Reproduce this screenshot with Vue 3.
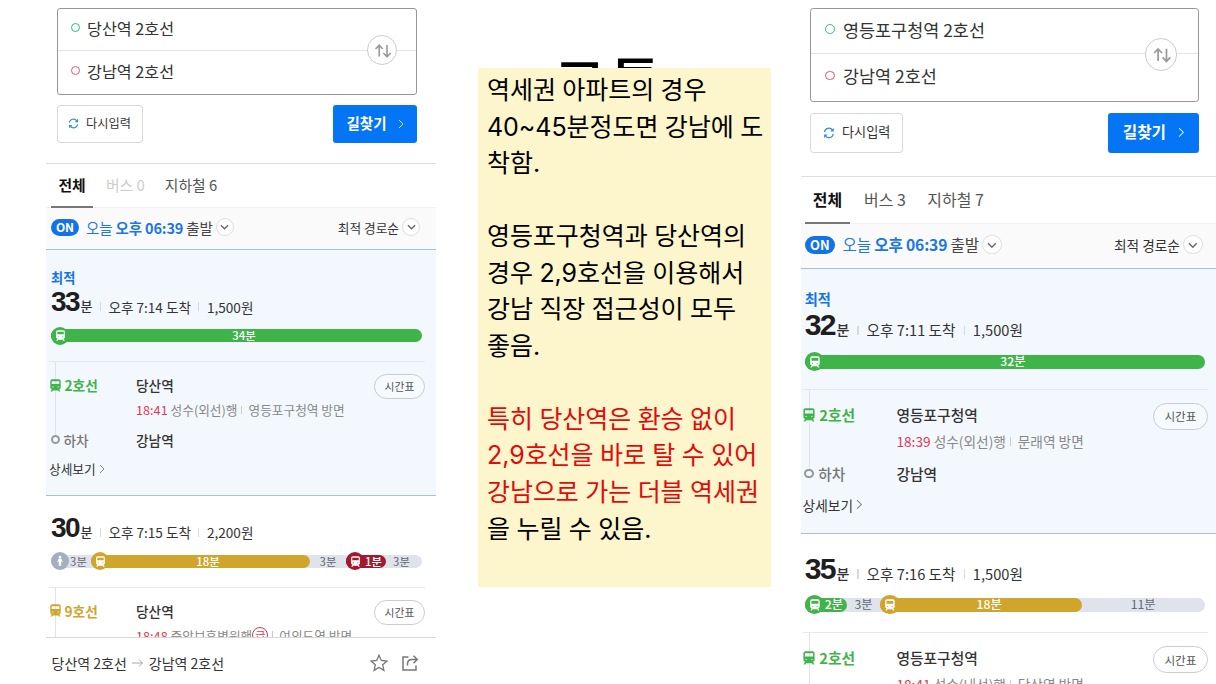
<template>
  <main class="slide">
    <div
      v-for="panel in panels"
      :key="panel.id"
      class="panel"
      :class="panel.id"
    >
      <div class="sheet">
        <section class="search">
          <div class="fields">
            <div class="field from"><i></i>{{ panel.from }}</div>
            <div class="field to"><i></i>{{ panel.to }}</div>
            <button class="swap">
              <svg viewBox="0 0 30 30" width="30" height="30">
                <path d="M11.2 20.500V9.500M7.600 13l3.600-3.800 3.600 3.800M19 9v11.500M15.400 17l3.600 3.800 3.600-3.800" />
              </svg>
            </button>
          </div>
          <div class="buttons">
            <button class="reset">
              <svg viewBox="0 0 12 12" width="11" height="11">
                <path d="M1.5 5.2A4.5 4.5 0 0 1 9.6 3.1M10.5 6.8a4.5 4.5 0 0 1-8.1 2.1" />
                <path class="tip" d="M10.9.9v3.6H7.3zM1.1 11.1V7.5h3.6z" />
              </svg>
              <span>다시입력</span>
            </button>
            <button class="find">
              <span>길찾기</span>
              <svg viewBox="0 0 6 10" width="6" height="10">
                <path d="M1 1l4 4-4 4" />
              </svg>
            </button>
          </div>
        </section>

        <nav class="tabs">
          <span class="active">전체</span>
          <span :class="{ empty: panel.bus == 0 }">버스 {{ panel.bus }}</span>
          <span>지하철 {{ panel.subway }}</span>
        </nav>

        <div class="filter">
          <b class="on">ON</b>
          <span class="when">오늘 <b>오후 06:39</b> <em>출발</em></span>
          <span class="chevron">
            <svg viewBox="0 0 10 6" width="9" height="6"><path d="M1 1l4 4 4-4" /></svg>
          </span>
          <span class="sort">최적 경로순</span>
          <span class="chevron">
            <svg viewBox="0 0 10 6" width="9" height="6"><path d="M1 1l4 4 4-4" /></svg>
          </span>
        </div>

        <section class="routes">
          <article
            v-for="route in panel.routes"
            :key="route.minutes"
            class="route"
            :class="{ best: route.best }"
          >
            <div v-if="route.best" class="badge">최적</div>
            <div class="summary">
              <strong>{{ route.minutes }}</strong><b>분</b>
              <span>오후 {{ route.arrival }} 도착</span>
              <span>{{ route.fare }}원</span>
            </div>
            <div class="track">
              <div
                v-for="(seg, i) in route.segments"
                :key="i"
                class="segment"
                :class="seg.kind"
                :style="{ width: seg.width + 'px' }"
              >
                <span v-if="seg.kind != 'gap'" class="dot">
                  <svg v-if="seg.kind == 'walk'" viewBox="0 0 12 12" width="12" height="12">
                    <circle cx="6" cy="2" r="1.3" />
                    <path d="M4.8 3.6h2.4L8.8 7l-.8.5-1-1.5.2 5H6.2L6 8l-.3 3h-1L5 6 4 7.5 3.3 7z" />
                  </svg>
                  <svg v-else viewBox="0 0 12 12" width="11" height="11">
                    <path :d="trainPath" fill-rule="evenodd" />
                  </svg>
                </span>
                {{ seg.label }}분
              </div>
            </div>
            <div class="steps">
              <div class="step">
                <span class="line" :class="route.line.kind">
                  <svg viewBox="0 0 12 12" width="13" height="13">
                    <path :d="trainPath" fill-rule="evenodd" />
                  </svg>
                  {{ route.line.name }}
                </span>
                <span class="station">{{ panel.station }}</span>
                <button class="timetable">시간표</button>
              </div>
              <div class="detail">
                <em>{{ route.line.time }}</em> {{ route.line.bound
                }}<i v-if="route.line.express">급</i>
                <span>{{ route.line.via }} 방면</span>
              </div>
              <template v-if="route.best">
                <div class="step off">
                  <span class="line"><i></i>하차</span>
                  <span class="station">강남역</span>
                </div>
                <div class="more">
                  상세보기
                  <svg viewBox="0 0 6 10" width="6" height="10"><path d="M1 1l4 4-4 4" /></svg>
                </div>
              </template>
            </div>
          </article>
        </section>

        <footer v-if="panel.footer" class="bottom">
          {{ panel.from }}
          <svg class="arrow" viewBox="0 0 12 10" width="12" height="10">
            <path d="M0 5h10.5M7 1.5L10.5 5 7 8.5" />
          </svg>
          {{ panel.to }}
          <svg class="star" viewBox="0 0 18 18" width="18" height="18">
            <path d="M9 1.2l2.3 5.2 5.6.6-4.2 3.8 1.2 5.6L9 13.5l-4.9 2.9 1.2-5.6L1.1 7l5.6-.6z" />
          </svg>
          <svg class="share" viewBox="0 0 18 18" width="18" height="18">
            <path d="M7.5 3H2v13h13v-4.5M6.5 11.5V10q0-4.5 4.5-4.5h4.5M12.500 1.800l3.700 3.700-3.700 3.700" />
          </svg>
        </footer>
      </div>
    </div>

    <section class="memo">
      <h1>교통</h1>
      <div class="note">
        <p v-for="(line, i) in note" :key="i" :class="{ red: line.red }">
          {{ line.text }}
        </p>
      </div>
    </section>
  </main>
</template>

<script setup>
const trainPath =
  "M3 .3h6Q10.800.3 10.800 2v5.800Q10.800 9.300 9.300 9.300H2.700Q1.200 9.300 1.200 7.800V2Q1.200.3 3 .3zM2.500 2v2.700h7v-2.700zM3 7v.8h1.200v-.8zM7.800 7v.8h1.200v-.8zM2.600 9.300h6.800l1.200 2.300H9.100l-.6-1.100H3.500l-.6 1.100H1.400z";

const panels = [
  {
    id: "left",
    from: "당산역 2호선",
    to: "강남역 2호선",
    station: "당산역",
    bus: 0,
    subway: 6,
    footer: true,
    routes: [
      {
        best: true,
        minutes: 33,
        arrival: "7:14",
        fare: "1,500",
        segments: [{ kind: "green", label: 34, width: 371 }],
        line: {
          kind: "green",
          name: "2호선",
          time: "18:41",
          bound: "성수(외선)행",
          via: "영등포구청역",
        },
      },
      {
        minutes: 30,
        arrival: "7:15",
        fare: "2,200",
        segments: [
          { kind: "walk", label: 3, width: 40 },
          { kind: "gold", label: 18, width: 219 },
          { kind: "gap", label: 3, width: 36 },
          { kind: "crimson", label: 1, width: 40 },
          { kind: "gap", label: 3, width: 31 },
        ],
        line: {
          kind: "gold",
          name: "9호선",
          time: "18:48",
          bound: "중앙보훈병원행",
          express: true,
          via: "여의도역",
        },
      },
    ],
  },
  {
    id: "right",
    from: "영등포구청역 2호선",
    to: "강남역 2호선",
    station: "영등포구청역",
    bus: 3,
    subway: 7,
    routes: [
      {
        best: true,
        minutes: 32,
        arrival: "7:11",
        fare: "1,500",
        segments: [{ kind: "green", label: 32, width: 371 }],
        line: {
          kind: "green",
          name: "2호선",
          time: "18:39",
          bound: "성수(외선)행",
          via: "문래역",
        },
      },
      {
        minutes: 35,
        arrival: "7:16",
        fare: "1,500",
        segments: [
          { kind: "green", label: 2, width: 39 },
          { kind: "gap", label: 3, width: 31 },
          { kind: "gold", label: 18, width: 187 },
          { kind: "gap", label: 11, width: 114 },
        ],
        line: {
          kind: "green",
          name: "2호선",
          time: "18:41",
          bound: "성수(내선)행",
          via: "당산역",
        },
      },
    ],
  },
];

const note = [
  { text: "역세권 아파트의 경우" },
  { text: "40~45분정도면 강남에 도" },
  { text: "착함." },
  { text: "" },
  { text: "영등포구청역과 당산역의" },
  { text: "경우 2,9호선을 이용해서" },
  { text: "강남 직장 접근성이 모두" },
  { text: "좋음." },
  { text: "" },
  { text: "특히 당산역은 환승 없이", red: true },
  { text: "2,9호선을 바로 탈 수 있어", red: true },
  { text: "강남으로 가는 더블 역세권", red: true },
  { text: "을 누릴 수 있음." },
];
</script>

<style>
body {
  background: #fff;
}
</style>

<style scoped>
* {
  box-sizing: border-box;
}

.slide {
  display: grid;
  grid-template-columns: 46px 390px 42px 293px 30px 415px;
  width: 1216px;
  height: 684px;
  overflow: hidden;
  font-family: "Noto Sans CJK KR", sans-serif;
  color: #333;
}

.panel {
  height: 684px;
  grid-row: 1;
  overflow: hidden;
}

.left {
  grid-column: 2;
}

.right {
  grid-column: 6;
}

.memo {
  grid-column: 4;
  grid-row: 1;
}

.sheet {
  display: flex;
  flex-direction: column;
  width: 390px;
  height: 684px;
}

/* the right capture is the same screen, slightly enlarged and cropped */
.right .sheet {
  zoom: 1.078;
  margin-left: -1.5px;
}

button {
  padding: 0;
  font-family: inherit;
  color: inherit;
  background: #fff;
}

em,
i {
  font-style: normal;
}

svg {
  flex: none;
  fill: none;
  stroke: currentColor;
}

.search {
  flex: none;
  height: 164px;
  padding: 8px 19px 0 10.5px;
  border-bottom: 1px solid #dedede;
}

.right .search {
  padding: 7.5px 19.5px 0 10px;
}

.fields {
  position: relative;
  height: 87px;
  border: 1px solid #969696;
  border-radius: 3px;
}

.field {
  display: flex;
  align-items: center;
  gap: 7.5px;
  height: 42px;
  padding-left: 13px;
  padding-bottom: 4px;
  font-size: 16.2px;
}

.to {
  padding-bottom: 3px;
}

.from {
  border-bottom: 1px solid #e4e4e4;
}

.field i {
  width: 9px;
  height: 9px;
  border: 1px solid #2fbd7c;
  border-radius: 50%;
}

.to i {
  border-color: #e0566f;
}

.swap {
  position: absolute;
  top: 27px;
  right: 19px;
  width: 30px;
  height: 30px;
  border: 1.5px solid #ccc;
  border-radius: 50%;
  color: #999;
  display: grid;
  place-items: center;
}

.left .swap {
  top: 26px;
}

.swap svg {
  stroke-width: 1.6;
}

.buttons {
  display: flex;
  justify-content: space-between;
  margin-top: 10px;
}

.reset,
.find {
  display: flex;
  align-items: center;
  justify-content: center;
  height: 37.5px;
  border-radius: 3px;
}

.buttons span {
  padding-bottom: 2px;
}

.reset {
  gap: 7px;
  width: 86px;
  border: 1px solid #d8d8d8;
  font-size: 12.2px;
}

.reset svg {
  color: #2d8be8;
  stroke-width: 1.2;
}

.reset .tip {
  fill: currentColor;
  stroke: none;
}

.find {
  gap: 11px;
  width: 84px;
  border: 0;
  background: #0475f4;
  color: #fff;
  font-size: 14.5px;
  font-weight: 700;
}

.find svg {
  opacity: 0.8;
}

.tabs {
  flex: none;
  display: flex;
  height: 44px;
  padding-left: 5px;
  border-bottom: 1px solid #f2f2f2;
  font-size: 14.8px;
  line-height: 42px;
  color: #555;
}

.tabs span {
  margin-right: 20px;
}

.tabs .active {
  width: 42px;
  height: 44px;
  margin-right: 13px;
  border-bottom: 2px solid #777;
  text-align: center;
  font-weight: 700;
  color: #111;
}

.tabs .empty {
  color: #ccc;
}

.filter {
  flex: none;
  display: flex;
  align-items: center;
  height: 42px;
  padding: 0 16px 3px 5px;
  background: #fafafa;
  border-bottom: 1px solid #9cc3e0;
}

.on {
  width: 28px;
  height: 17px;
  margin-right: 7px;
  border-radius: 9px;
  background: #1272e8;
  color: #fff;
  font-size: 12px;
  line-height: 16px;
  text-align: center;
}

.when {
  font-size: 14.5px;
  letter-spacing: -0.15px;
  color: #1b76e6;
}

.when em {
  color: #444;
}

.chevron {
  display: grid;
  place-items: center;
  width: 18px;
  height: 18px;
  margin-left: 3px;
  border: 1px solid #dedede;
  border-radius: 50%;
  background: #fff;
  color: #666;
}

.chevron svg {
  stroke-width: 1.5;
}

.sort {
  margin-left: auto;
  font-size: 12.7px;
}

.routes {
  flex: 1;
  min-height: 0;
  overflow: hidden;
}

.route {
  padding: 18px 11px 0 3px;
}

.best {
  height: 245.5px;
  padding-top: 18px;
  background: #f3f8fe;
  border-bottom: 1px solid #9cc3e0;
}

.badge {
  height: 20px;
  padding-left: 2px;
  font-size: 13.2px;
  font-weight: 700;
  line-height: 20px;
  color: #1272e8;
}

.summary {
  display: flex;
  align-items: baseline;
  height: 28px;
  padding-left: 2px;
  font-size: 13.6px;
  line-height: 28px;
}

.summary strong {
  font-family: "Liberation Sans", sans-serif;
  font-size: 28px;
  letter-spacing: -1.6px;
  color: #1e1e1e;
}

.summary b {
  margin-left: 1.5px;
  font-size: 13px;
  font-weight: 500;
}

.summary span {
  display: flex;
  align-items: center;
}

.summary span::before {
  content: "";
  width: 1px;
  height: 9px;
  margin: 0 7.5px;
  background: #d5dae0;
}

.track {
  display: flex;
  height: 13px;
  margin: 13px 3px 19px 2px;
  border-radius: 7px;
  background: #dfe4ec;
}

.segment {
  position: relative;
  height: 13px;
  padding-left: 15px;
  border-radius: 7px;
  font-size: 11.4px;
  font-weight: 500;
  line-height: 12px;
  text-align: center;
  white-space: nowrap;
  color: #fff;
}

.gap,
.walk {
  font-weight: 400;
  color: #667;
}

.gap {
  padding-left: 0;
}

.dot {
  position: absolute;
  top: -2.5px;
  left: 0;
  display: grid;
  place-items: center;
  width: 18px;
  height: 18px;
  border-radius: 50%;
  color: #fff;
}

.dot svg,
.line svg {
  fill: currentColor;
  stroke: none;
}

.line svg {
  margin-left: -0.5px;
}

.green,
.green .dot {
  background: #3eb449;
}

.gold,
.gold .dot {
  background: #cfa52b;
}

.crimson,
.crimson .dot {
  background: #a3182f;
}

.walk .dot {
  background: #a3afc0;
}

.steps {
  position: relative;
  padding-top: 12px;
  border-top: 1px solid #e4e9f0;
}

.steps::before {
  content: "";
  position: absolute;
  top: 0;
  left: 6px;
  width: 1px;
  height: 73px;
  background: #dde3ea;
}

.step {
  position: relative;
  display: flex;
  align-items: center;
  height: 25px;
}

.line {
  display: flex;
  align-items: center;
  gap: 3px;
  width: 87px;
  padding-bottom: 3px;
  font-size: 13.7px;
  font-weight: 700;
}

.line.green,
.line.gold {
  background: none;
}

.line.green {
  color: #3eb449;
}

.line.gold {
  color: #cfa52b;
}

.off .line {
  gap: 4px;
  padding-bottom: 2px;
  font-weight: 500;
  color: #777;
}

.off .line i {
  width: 9px;
  height: 9px;
  margin-left: 1.5px;
  border: 2px solid #999;
  border-radius: 50%;
}

.station {
  padding-bottom: 3px;
  font-size: 13.7px;
  font-weight: 500;
}

.off .station {
  padding-bottom: 2px;
}

.timetable {
  width: 51px;
  height: 25px;
  margin-left: auto;
  padding-bottom: 1px;
  border: 1px solid #c8ccd2;
  border-radius: 13px;
  font-size: 10.8px;
  color: #555;
}

.best .timetable {
  background: #f6faff;
}

.detail {
  display: flex;
  align-items: center;
  height: 24px;
  padding-left: 87px;
  padding-bottom: 3px;
  font-size: 12.7px;
  white-space: pre;
  color: #888;
}

.detail em {
  color: #e03a4e;
}

.detail i {
  width: 16px;
  height: 16px;
  border: 1px solid #e03a4e;
  border-radius: 50%;
  font-size: 11px;
  line-height: 14px;
  text-align: center;
  color: #e03a4e;
}

.detail span {
  display: flex;
  align-items: center;
}

.detail span::before {
  content: "";
  width: 1px;
  height: 8px;
  margin: 0 6px 0 4px;
  background: #ccc;
}

.off {
  margin-top: 5px;
}

.more {
  display: flex;
  align-items: center;
  gap: 3px;
  height: 25px;
  margin-top: 3px;
  font-size: 12.7px;
}

.more svg {
  color: #888;
}

.bottom {
  flex: none;
  display: flex;
  align-items: center;
  height: 47px;
  padding: 4px 17px 0 5.5px;
  border-top: 1px solid #d8d8d8;
  font-size: 14px;
}

.arrow {
  margin: 0 5px;
  color: #aaa;
}

.star {
  margin-left: auto;
  color: #777;
  stroke-width: 1.3;
}

.share {
  margin-left: 13px;
  color: #777;
  stroke-width: 1.5;
}

.memo h1 {
  height: 68px;
  margin: 0;
  padding: 40px 0 0 76px;
  font-size: 56px;
  font-weight: 500;
  line-height: 80px;
  letter-spacing: 4px;
  color: #000;
}

.note {
  position: relative;
  height: 519px;
  padding: 4px 9px;
  background: #fdf5cb;
  font-family: Inter, "Noto Sans CJK KR", sans-serif;
  font-size: 25px;
  line-height: 36.55px;
  letter-spacing: -0.05px;
  word-spacing: -0.5px;
  color: #000;
}

.note p {
  height: 36.55px;
  margin: 0;
  white-space: nowrap;
}

.note .red {
  color: #e00b0b;
}
</style>
